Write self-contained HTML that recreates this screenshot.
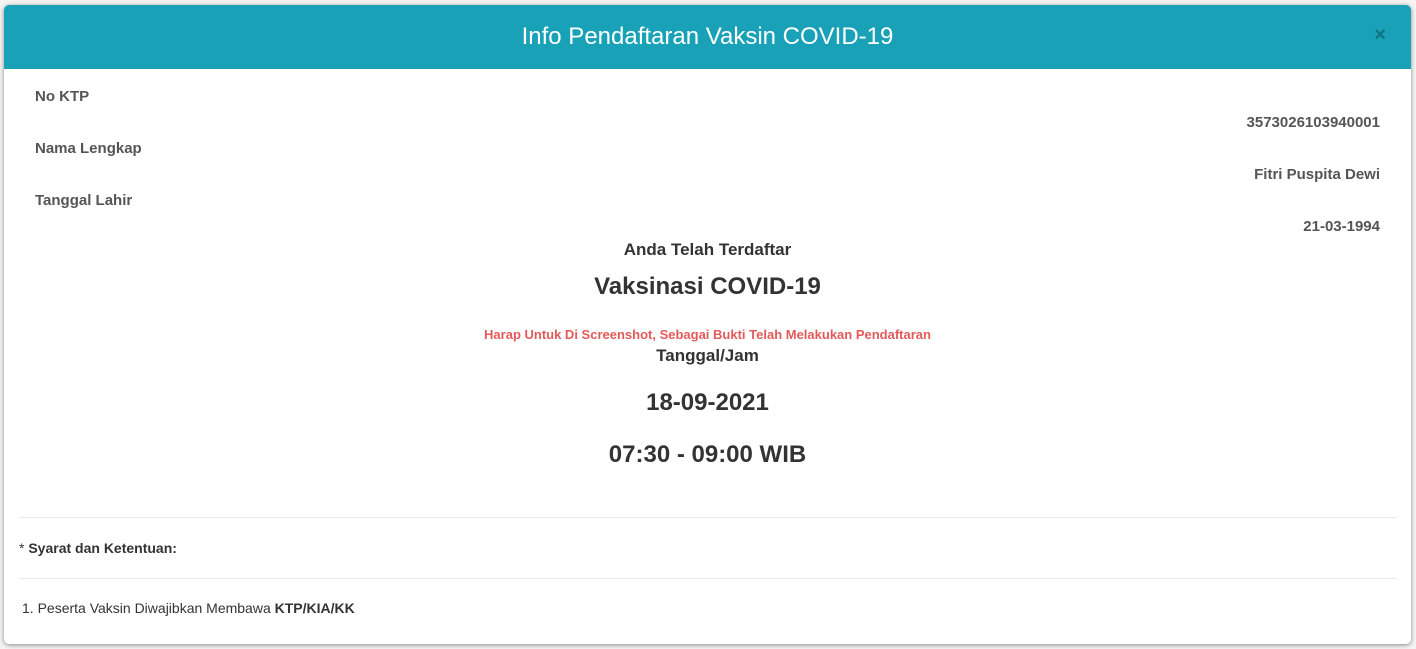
<!DOCTYPE html>
<html><head><style>
body{margin:0;width:1416px;height:649px;background:#f4f4f4;font-family:"Liberation Sans",Arial,sans-serif;position:relative;overflow:hidden}
.m{position:absolute;left:4px;top:5px;width:1407px;height:639px;background:#fff;border-radius:5px;box-shadow:0 1px 5px rgba(0,0,0,.45);overflow:hidden}
.h{position:absolute;left:0;top:0;width:100%;height:64px;background:#18a1b7;color:#fff;font-size:24px;text-align:center;line-height:64px}
.x{position:absolute;right:25px;top:0;line-height:60px;color:#0f7482;font-size:20px;font-weight:bold}
.t{position:absolute;white-space:nowrap;font-weight:bold;color:#555;font-size:15px}
.r{right:31px;text-align:right}
.c{left:0;width:100%;text-align:center;color:#333}
.hr{position:absolute;left:15px;right:15px;height:1px;background:#eaeaea}
</style></head><body>
<div class="m">
<div class="h">Info Pendaftaran Vaksin COVID-19<span class="x">×</span></div>
<div class="t" style="left:31px;top:83px">No KTP</div>
<div class="t r" style="top:109px">3573026103940001</div>
<div class="t" style="left:31px;top:135px">Nama Lengkap</div>
<div class="t r" style="top:161px">Fitri Puspita Dewi</div>
<div class="t" style="left:31px;top:187px">Tanggal Lahir</div>
<div class="t r" style="top:213px">21-03-1994</div>
<div class="t c" style="top:235px;font-size:17px">Anda Telah Terdaftar</div>
<div class="t c" style="top:268px;font-size:24px">Vaksinasi COVID-19</div>
<div class="t c" style="top:322px;font-size:13px;color:#e35a5a">Harap Untuk Di Screenshot, Sebagai Bukti Telah Melakukan Pendaftaran</div>
<div class="t c" style="top:341px;font-size:17px">Tanggal/Jam</div>
<div class="t c" style="top:384px;font-size:24px">18-09-2021</div>
<div class="t c" style="top:436px;font-size:24px">07:30 - 09:00 WIB</div>
<div class="hr" style="top:512px"></div>
<div class="t" style="left:15px;top:535px;font-size:14px;color:#333"><span style="font-weight:normal">*</span> Syarat dan Ketentuan:</div>
<div class="hr" style="top:573px"></div>
<div class="t" style="left:18px;top:595px;font-size:14px;color:#333;font-weight:normal">1. Peserta Vaksin Diwajibkan Membawa <b>KTP/KIA/KK</b></div>
</div>
</body></html>
